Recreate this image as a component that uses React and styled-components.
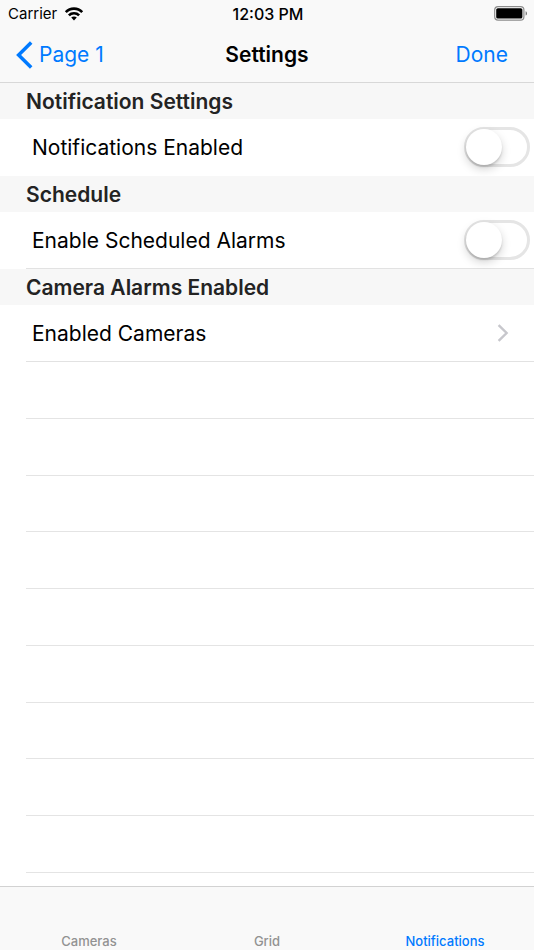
import React, { useState } from "react";
import styled, { createGlobalStyle } from "styled-components";

const emptyRows = Array.from({ length: 9 }, (_, i) => i);
const tabs = ["Cameras", "Grid", "Notifications"];

const App = () => {
	const [notifications, setNotifications] = useState(false);
	const [schedule, setSchedule] = useState(false);
	const [activeTab, setActiveTab] = useState("Notifications");

	return (
		<Screen>
			<GlobalStyle />
			<Header>
				<StatusBar>
					<Carrier>
						Carrier
						<WifiIcon />
					</Carrier>
					<Clock>12:03 PM</Clock>
					<BatteryIcon />
				</StatusBar>
				<NavBar>
					<BackButton type="button">
						<BackIcon />
						Page 1
					</BackButton>
					<Title>Settings</Title>
					<DoneButton type="button">Done</DoneButton>
				</NavBar>
			</Header>

			<Main>
				<SectionTitle>Notification Settings</SectionTitle>
				<SwitchRow>
					Notifications Enabled
					<Switch
						type="checkbox"
						checked={notifications}
						onChange={(e) => setNotifications(e.target.checked)}
					/>
				</SwitchRow>

				<SectionTitle>Schedule</SectionTitle>
				<SwitchRow $line>
					Enable Scheduled Alarms
					<Switch
						type="checkbox"
						checked={schedule}
						onChange={(e) => setSchedule(e.target.checked)}
					/>
				</SwitchRow>

				<SectionTitle>Camera Alarms Enabled</SectionTitle>
				<LinkRow href="#cameras">
					Enabled Cameras
					<ArrowIcon />
				</LinkRow>

				<EmptyRows>
					{emptyRows.map((row) => (
						<EmptyRow key={row} />
					))}
				</EmptyRows>
			</Main>

			<TabBar>
				{tabs.map((tab) => (
					<Tab
						key={tab}
						type="button"
						$active={tab === activeTab}
						onClick={() => setActiveTab(tab)}
					>
						{tab}
					</Tab>
				))}
			</TabBar>
		</Screen>
	);
};

export default App;

const WifiIcon = () => (
	<svg width="20" height="14" viewBox="0 0 20 14" fill="none" stroke="#000" strokeWidth="2.6" aria-hidden="true">
		<path d="M1.8 5.1C6.2 0.5 13.8 0.5 18.2 5.1" />
		<path d="M4.9 8.4C7.6 5.6 12.4 5.6 15.1 8.4" />
		<path d="M7.2 10.6C8.8 9 11.2 9 12.8 10.6L10 13.4Z" fill="#000" stroke="none" />
	</svg>
);

const BatteryIcon = () => (
	<svg width="34" height="15" viewBox="0 0 34 15" aria-hidden="true">
		<rect x="0.7" y="0.7" width="29.2" height="13.4" rx="3.4" fill="#fff" stroke="#8c8c8c" strokeWidth="1.2" />
		<rect x="2.2" y="2.2" width="26.2" height="10.4" rx="1.6" fill="#000" />
		<path d="M31.6 5.2C33.5 5.9 33.5 8.9 31.6 9.6Z" fill="#777" />
	</svg>
);

const BackIcon = () => (
	<svg width="17" height="28" viewBox="0 0 17 28" fill="none" stroke="#007aff" strokeWidth="3.5" aria-hidden="true">
		<path d="M15.2 1.4L2.6 14L15.2 26.6" />
	</svg>
);

const ArrowIcon = () => (
	<svg width="12" height="18" viewBox="0 0 12 18" fill="none" stroke="#c7c7cc" strokeWidth="2.4" aria-hidden="true">
		<path d="M1.6 1.2L9.6 9L1.6 16.8" />
	</svg>
);

const GlobalStyle = createGlobalStyle`
* {
	box-sizing: border-box;
}
body {
	margin: 0;
	background: #fff;
	color: #000;
	font-family: Inter, "Liberation Sans", sans-serif;
}
button {
	border: none;
	padding: 0;
	background: none;
	font: inherit;
	cursor: pointer;
}
`;

const Screen = styled.div`
	display: flex;
	flex-direction: column;
	min-height: 100vh;
`;

const Header = styled.header`
	background: #f9f9f9;
	border-bottom: 1px solid #d8d8d8;
`;

const StatusBar = styled.div`
	display: grid;
	grid-template-columns: 1fr auto 1fr;
	align-items: center;
	height: 27px;
	padding: 0 6px 0 8px;
	font-size: 15px;

	> svg {
		justify-self: end;
	}
`;

const Carrier = styled.span`
	display: flex;
	align-items: center;
	gap: 7px;
`;

const Clock = styled.span`
	font-size: 16px;
	font-weight: 500;
`;

const NavBar = styled.nav`
	display: grid;
	grid-template-columns: 1fr auto 1fr;
	align-items: center;
	height: 55px;
	padding: 0 26px;
	font-size: 21px;
`;

const NavButton = styled.button`
	display: flex;
	align-items: center;
	gap: 6px;
	color: #007aff;
`;

const BackButton = styled(NavButton)`
	justify-self: start;
	margin-left: -10px;
`;

const DoneButton = styled(NavButton)`
	justify-self: end;
`;

const Title = styled.h1`
	margin: 0;
	font-size: 21px;
	font-weight: 600;
`;

const Main = styled.main`
	display: flex;
	flex-direction: column;
	flex: 1;
`;

const SectionTitle = styled.h2`
	margin: 0;
	padding: 2px 26px 0;
	background: #f7f7f7;
	color: #232323;
	font-size: 21px;
	font-weight: 600;
	line-height: 34px;
`;

const SwitchRow = styled.label`
	display: flex;
	align-items: center;
	justify-content: space-between;
	height: 57px;
	padding: 0 4px 1px 32px;
	font-size: 21px;
	background: ${({ $line }) =>
		$line ? "linear-gradient(#e2e2e2, #e2e2e2) 26px 100% / 100% 1px no-repeat" : "none"};
`;

const LinkRow = styled.a`
	display: flex;
	align-items: center;
	justify-content: space-between;
	height: 57px;
	padding: 0 25px 1px 32px;
	background: linear-gradient(#e2e2e2, #e2e2e2) 26px 100% / 100% 1px no-repeat;
	color: inherit;
	font-size: 21px;
	text-decoration: none;
`;

const Switch = styled.input`
	appearance: none;
	width: 66px;
	height: 40px;
	margin: 0;
	border: 3px solid #e5e5e5;
	border-radius: 20px;
	background: ${({ checked }) => (checked ? "#4cd964" : "#fff")};
	cursor: pointer;

	&::before {
		content: "";
		display: block;
		width: 36px;
		height: 36px;
		margin: -1px 0 0 ${({ checked }) => (checked ? "25px" : "-1px")};
		border-radius: 50%;
		background: #fff;
		box-shadow: 0 4px 10px rgba(0, 0, 0, 0.18), 0 2px 2px rgba(0, 0, 0, 0.12);
	}
`;

const EmptyRows = styled.div`
	display: flex;
	flex-direction: column;
	flex: 1;
	padding: 0 0 13px 26px;
`;

const EmptyRow = styled.div`
	flex: 1;
	min-height: 44px;
	border-bottom: 1px solid #e4e4e4;
`;

const TabBar = styled.nav`
	display: grid;
	grid-template-columns: repeat(3, 1fr);
	height: 64px;
	border-top: 1px solid #d2d2d2;
	background: #f9f9f9;
`;

const Tab = styled.button`
	&& {
		display: flex;
		align-items: flex-end;
		justify-content: center;
		padding-bottom: 1px;
		color: ${({ $active }) => ($active ? "#007aff" : "#929292")};
		font-size: 13px;
		font-weight: 500;
	}
`;
